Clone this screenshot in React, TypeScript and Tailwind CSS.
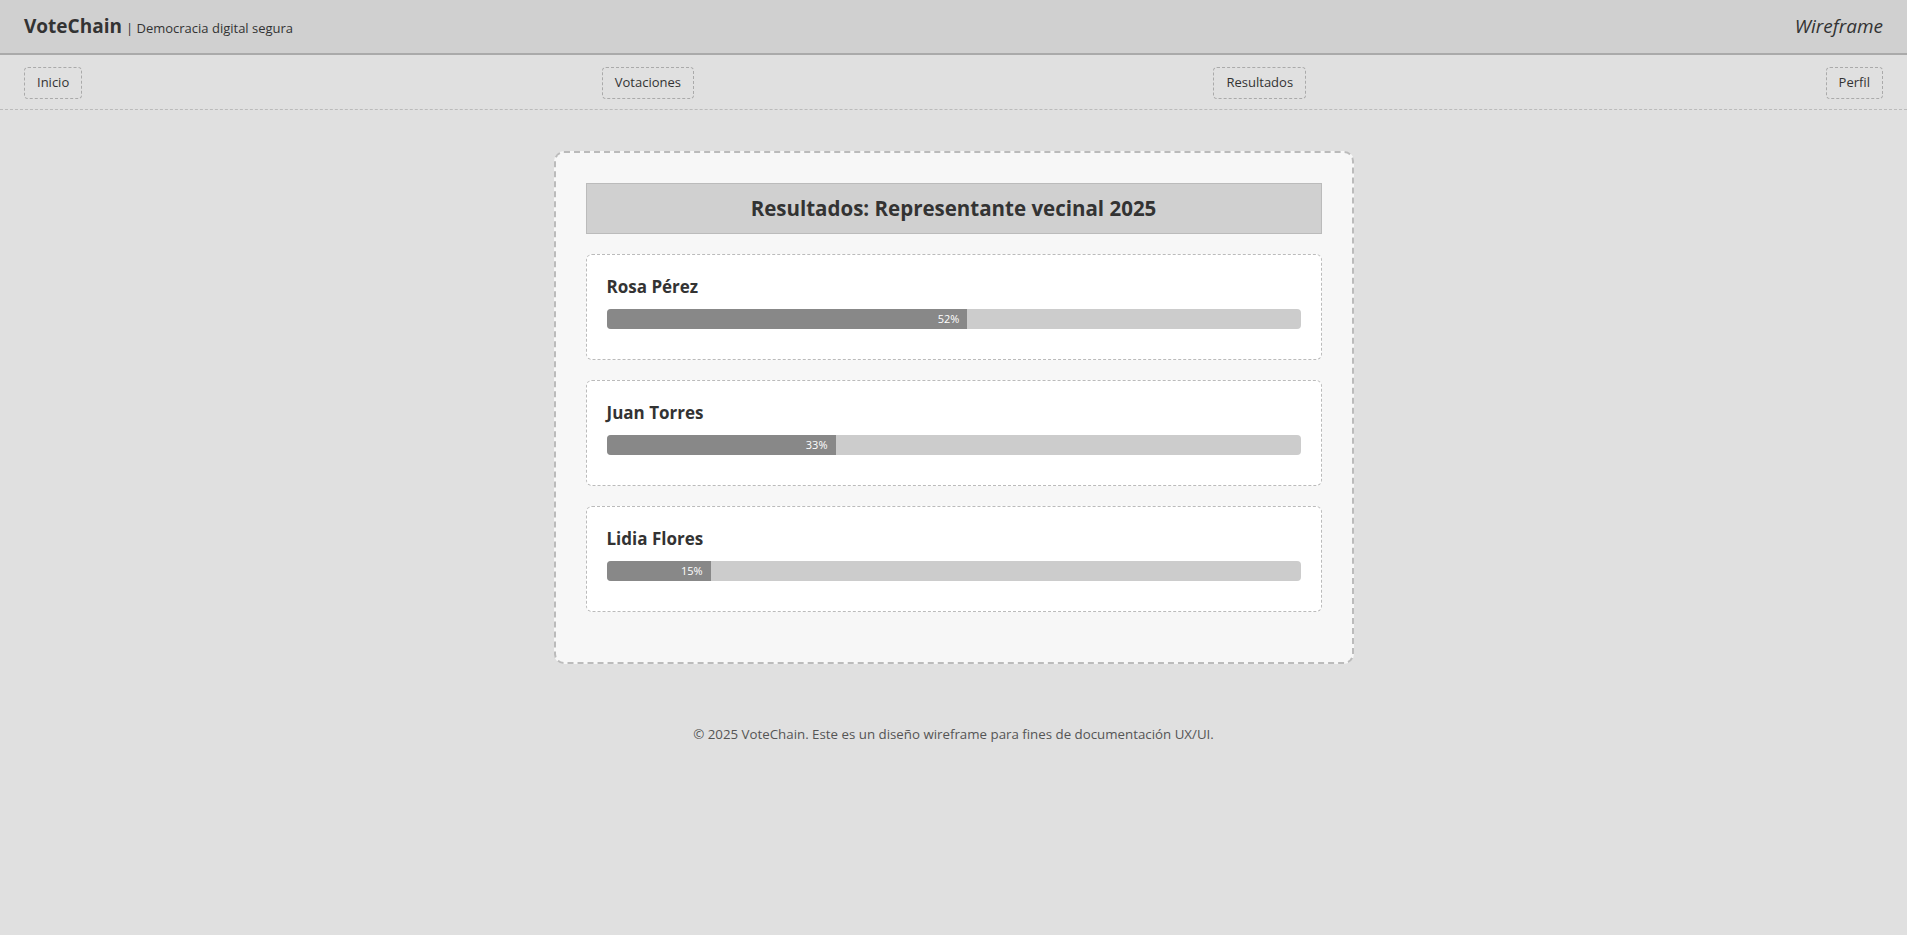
import React from "react";

interface Candidate {
  name: string;
  percent: number;
}

const candidates: Candidate[] = [
  { name: "Rosa Pérez", percent: 52 },
  { name: "Juan Torres", percent: 33 },
  { name: "Lidia Flores", percent: 15 },
];

const navItems = ["Inicio", "Votaciones", "Resultados", "Perfil"];

const App: React.FC = () => {
  return (
    <div
      className="min-h-[935px] bg-[#e0e0e0] text-[#333]"
      style={{ fontFamily: '"Open Sans", "Noto Sans", sans-serif' }}
    >
      {/* Cabecera */}
      <header className="flex h-[55px] items-center justify-between border-b-2 border-[#aaa] bg-[#d0d0d0] px-6">
        <div className="flex items-baseline">
          <span className="text-[19px] font-bold">VoteChain</span>
          <span className="ml-1 text-[13px]">| Democracia digital segura</span>
        </div>
        <span className="text-[19px] italic">Wireframe</span>
      </header>

      {/* Navegación */}
      <nav className="flex h-[55px] items-center justify-between border-b border-dashed border-[#bbb] px-6 pt-[2px]">
        {navItems.map((item) => (
          <button
            key={item}
            className="h-[32px] rounded border border-dashed border-[#aaa] px-3 text-[13px] text-[#333]"
          >
            {item}
          </button>
        ))}
      </nav>

      {/* Contenido */}
      <main className="mx-auto mt-[41px] w-[800px] rounded-[10px] border-2 border-dashed border-[#bbb] bg-[#f7f7f7] px-[30px] pt-[30px] pb-[30px]">
        <h1 className="mb-5 flex h-[51px] items-center justify-center border border-[#bbb] bg-[#d0d0d0] text-[20.5px] font-bold">
          Resultados: Representante vecinal 2025
        </h1>
        {candidates.map((c) => (
          <div
            key={c.name}
            className="mb-5 rounded-md border border-dashed border-[#bbb] bg-white px-5 pt-5 pb-[30px]"
          >
            <h2 className="mb-[10px] text-[17px] leading-6 font-bold">{c.name}</h2>
            <div className="h-[20px] w-full overflow-hidden rounded bg-[#ccc]">
              <div
                className="flex h-full items-center justify-end bg-[#888] pr-2 text-[11px] text-white"
                style={{ width: `${c.percent}%` }}
              >
                {c.percent}%
              </div>
            </div>
          </div>
        ))}
      </main>

      <footer className="mt-[61px] text-center text-[13.3px] text-[#555]">
        © 2025 VoteChain. Este es un diseño wireframe para fines de documentación UX/UI.
      </footer>
    </div>
  );
};

export default App;
